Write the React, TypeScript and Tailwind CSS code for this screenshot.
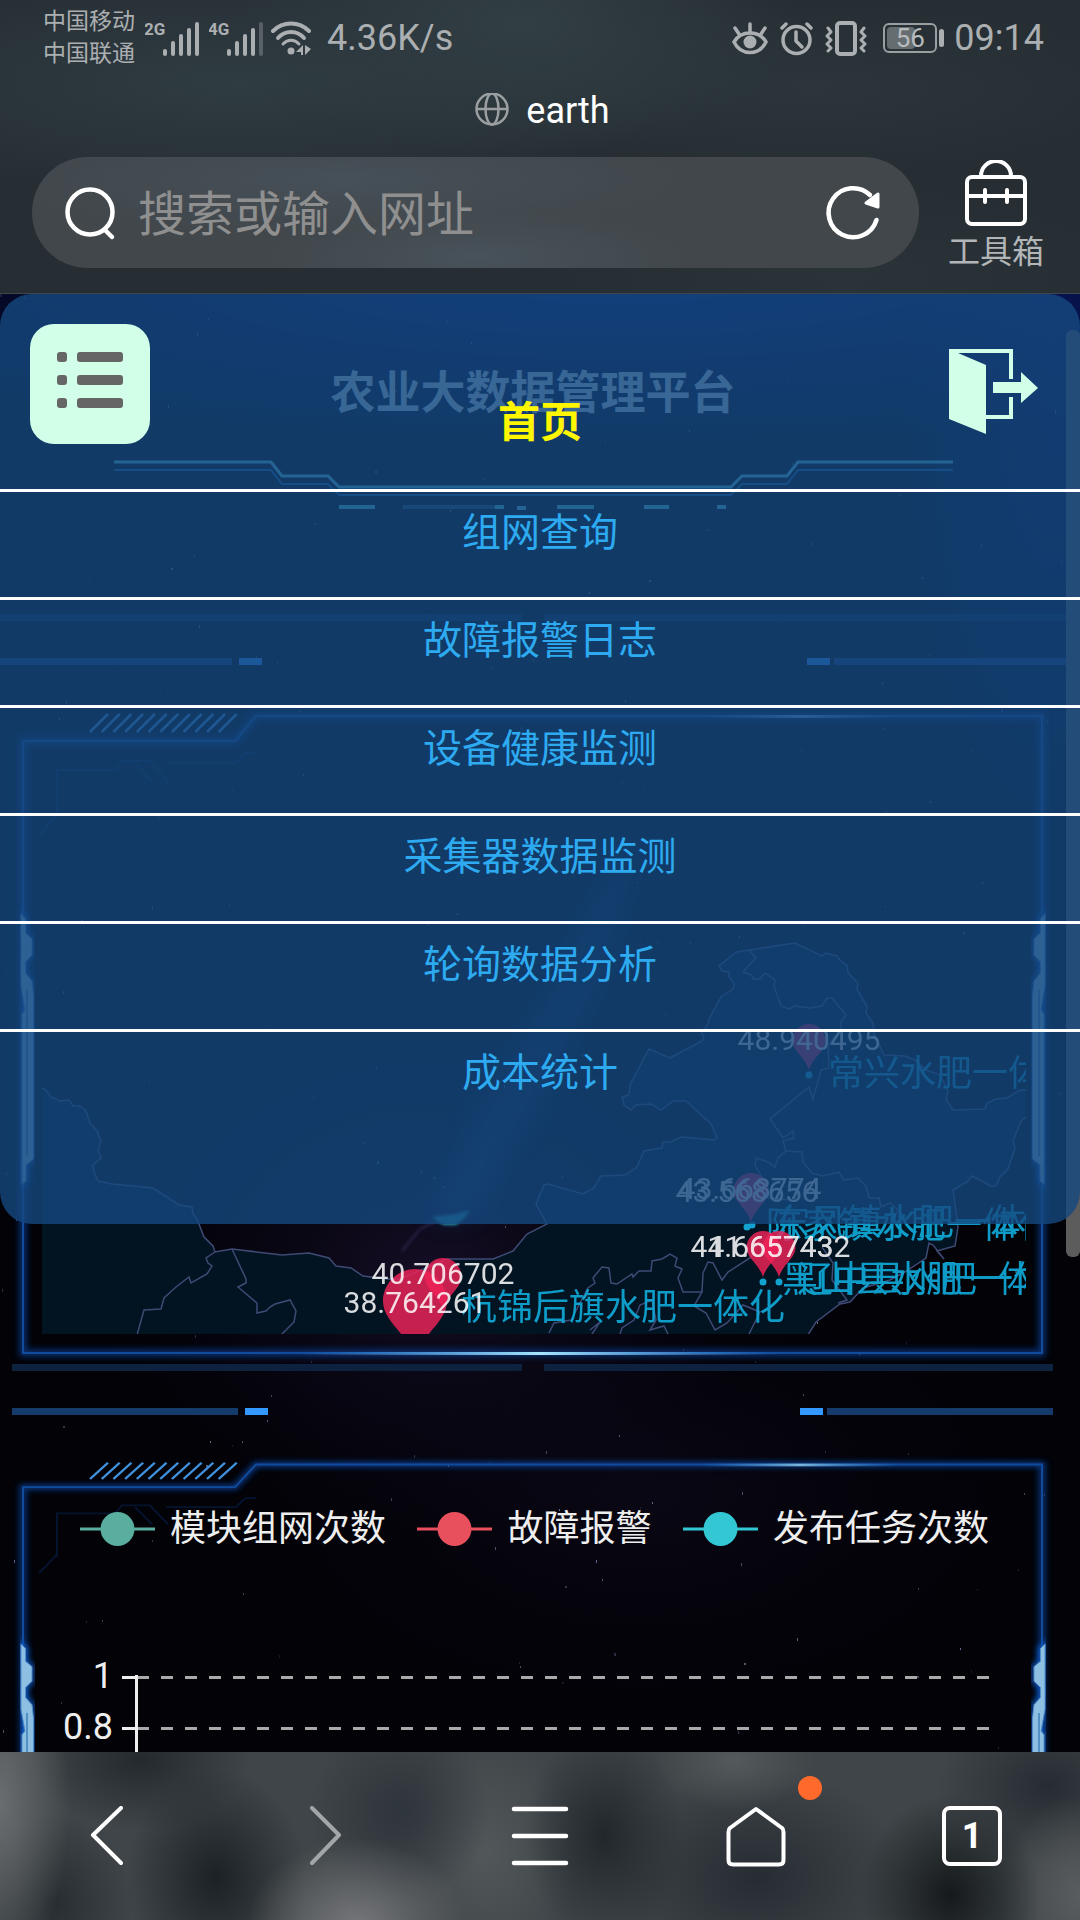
import React from "react";

const CJK = "font-['Roboto','Noto_Sans_CJK_SC',sans-serif]";

const menuItems = ["组网查询", "故障报警日志", "设备健康监测", "采集器数据监测", "轮询数据分析", "成本统计"];

const legend = [
  { label: "模块组网次数", color: "#5aaea0" },
  { label: "故障报警", color: "#e7505c" },
  { label: "发布任务次数", color: "#33c7d4" },
];

const stars = Array.from({ length: 230 }, (_, i) => ({
  x: (i * 397 + ((i * i * 31) % 211)) % 1066,
  y: (i * 613 + ((i * i * 17) % 307)) % 1458,
  o: 0.15 + ((i * 7) % 10) / 18,
}));

function Starfield() {
  return (
    <svg className="absolute inset-0 h-full w-full" viewBox="0 0 1080 1458" preserveAspectRatio="none" aria-hidden="true">
      <defs>
        <radialGradient id="top-glow" cx="0.5" cy="0.5" r="0.5">
          <stop offset="0" stopColor="#0a1a70" />
          <stop offset="1" stopColor="#0a1a70" stopOpacity="0" />
        </radialGradient>
        <radialGradient id="violet" cx="0.5" cy="0.5" r="0.5">
          <stop offset="0" stopColor="#1b1230" stopOpacity="0.75" />
          <stop offset="1" stopColor="#0a0716" stopOpacity="0" />
        </radialGradient>
        <filter id="soft" x="-50%" y="-50%" width="200%" height="200%">
          <feGaussianBlur stdDeviation="12" />
        </filter>
        <filter id="soft-small" x="-50%" y="-50%" width="200%" height="200%">
          <feGaussianBlur stdDeviation="1.5" />
        </filter>
      </defs>
      <rect width="1080" height="1458" fill="#020207" />
      <ellipse cx="620" cy="-20" rx="900" ry="170" fill="url(#top-glow)" />
      <ellipse cx="1060" cy="120" rx="160" ry="420" fill="url(#top-glow)" opacity="0.5" />
      <ellipse cx="430" cy="980" rx="330" ry="260" fill="url(#violet)" />
      <ellipse cx="640" cy="1200" rx="420" ry="240" fill="url(#violet)" opacity="0.45" />
      <path d="M430 925 L480 820 L560 690 L590 620 L640 540 L600 680 L530 820 L470 925 Z" fill="#143f78" opacity="0.4" filter="url(#soft)" />
      <path d="M432 923 L438 928 L444 931 L456 931 L464 925 L470 916 L455 920 Z" fill="#2aa5c0" opacity="0.9" filter="url(#soft-small)" />
      <path d="M402 957 L420 935 L438 926" fill="none" stroke="#4b3a72" strokeWidth="2" opacity="0.5" filter="url(#soft-small)" />
      {stars.map((s, i) => (
        <rect key={i} x={s.x} y={s.y} width={i % 9 === 0 ? 2 : 1} height={i % 4 === 0 ? 3 : 2} fill="#8fa3cf" opacity={s.o} />
      ))}
    </svg>
  );
}

function Signal({ label, weak }: { label: string; weak?: boolean }) {
  const tops = [47, 39, 32, 26, 20];
  return (
    <svg className="h-9 w-[54px]" viewBox="0 18 54 36" fill="none" aria-hidden="true">
      <text x="-1" y="33" fontFamily="Roboto, sans-serif" fontSize="17" fontWeight="700" fill="#abafb1">{label}</text>
      {tops.map((t, i) => (
        <rect key={t} x={18 + i * 8} y={t} width="4" height={54 - t} rx="2" fill="#abafb1" opacity={weak && i === 4 ? 0.35 : 1} />
      ))}
    </svg>
  );
}

function StatusBar() {
  return (
    <div className="flex h-[74px] items-center justify-between pl-[43px] pr-9 pt-[2px] text-[#abafb1]">
      <div className="flex items-center">
        <div className="mr-[10px] text-[23px] leading-8">
          <div>中国移动</div>
          <div>中国联通</div>
        </div>
        <Signal label="2G" />
        <div className="w-[10px]" />
        <Signal label="4G" weak />
        <svg className="ml-2 h-9 w-10" viewBox="0 0 40 36" fill="none" stroke="currentColor" strokeWidth="4" strokeLinecap="round" aria-hidden="true">
          <path d="M2 11 C12 1 28 1 38 11" />
          <path d="M7 18 C14 10 26 10 33 18" />
          <path d="M12 24 C17 19 23 19 28 24" strokeWidth="3" />
          <circle cx="20" cy="31" r="3.5" fill="currentColor" stroke="none" />
          <path d="M32 25 v10 h-2 v-3 l-5 0 z M34 25 v10 l6 -6 z" fill="currentColor" stroke="none" />
        </svg>
        <span className="ml-4 text-4xl">4.36K/s</span>
      </div>
      <div className="flex items-center">
        <svg className="h-9 w-9" viewBox="0 0 36 36" fill="none" stroke="currentColor" strokeWidth="3.5" strokeLinecap="round" aria-hidden="true">
          <path d="M2 22 C9 10 27 10 34 22 C27 36 9 36 2 22 Z" />
          <circle cx="18" cy="22" r="6.5" fill="currentColor" stroke="none" />
          <path d="M18 4 v8 M3 8 l4 6 M33 8 l-4 6" />
        </svg>
        <svg className="ml-3 h-9 w-[33px]" viewBox="0 0 33 36" fill="none" stroke="currentColor" strokeWidth="3.5" strokeLinecap="round" aria-hidden="true">
          <circle cx="16.500" cy="20" r="13.500" />
          <path d="M16 12 v9 l6 6" />
          <path d="M2 8 l4 -4 M31 8 l-4 -4" />
        </svg>
        <svg className="ml-3 h-9 w-[42px]" viewBox="0 0 42 36" fill="none" stroke="currentColor" strokeWidth="4" strokeLinejoin="round" strokeLinecap="round" aria-hidden="true">
          <rect x="12" y="3" width="18" height="31" rx="3" />
          <path d="M3 8 l3 4 l-4 4 l4 4 l-4 4 l4 4 l-3 3" strokeWidth="3" />
          <path d="M39 8 l-3 4 l4 4 l-4 4 l4 4 l-4 4 l3 3" strokeWidth="3" />
        </svg>
        <div className="ml-4 flex items-center gap-[2px]">
          <div className="relative flex h-[30px] w-[54px] items-center justify-center rounded-md border-2 border-[#9a9fa1]">
            <div className="absolute bottom-[2px] left-[2px] top-[2px] w-7 rounded-sm bg-[#666d70]" />
            <span className="relative text-[26px] leading-none text-[#b7bbbd]">56</span>
          </div>
          <div className="h-[18px] w-[5px] rounded-sm bg-[#abafb1]" />
        </div>
        <span className="ml-[10px] text-4xl">09:14</span>
      </div>
    </div>
  );
}

function BrowserHeader() {
  return (
    <header className="border-b border-[#40454a] bg-[#262e34] bg-[radial-gradient(ellipse_at_22%_28%,#2f3c42_0%,transparent_38%),radial-gradient(ellipse_at_48%_8%,#323f43_0%,transparent_35%),radial-gradient(ellipse_at_75%_30%,#2b353a_0%,transparent_30%),radial-gradient(ellipse_at_78%_95%,#2a3338_0%,transparent_25%)] pb-[21px]">
      <StatusBar />
      <div className="flex h-[73px] items-center justify-center gap-4 pl-1">
        <svg className="h-9 w-9" viewBox="0 0 36 36" fill="none" stroke="#9c9fa2" strokeWidth="2.5" aria-hidden="true">
          <circle cx="18" cy="16" r="15.500" />
          <ellipse cx="18" cy="16" rx="6.500" ry="15.500" />
          <path d="M2 16 h32" />
        </svg>
        <h1 className="text-4xl text-white">earth</h1>
      </div>
      <div className="mt-[10px] flex items-start pl-8 pr-9">
        <form className="flex h-[111px] flex-1 items-center rounded-full bg-[#41474b] bg-[radial-gradient(ellipse_at_35%_20%,#465058_0%,transparent_45%),radial-gradient(ellipse_at_50%_90%,#48525a_0%,transparent_35%)] pl-8 pr-9">
          <svg className="h-14 w-14" viewBox="0 0 56 56" fill="none" stroke="white" strokeWidth="4.5" strokeLinecap="round" aria-hidden="true">
            <circle cx="26" cy="27" r="22.500" />
            <path d="M41 45 l7 7" />
          </svg>
          <input aria-label="搜索或输入网址" placeholder="搜索或输入网址" className="ml-[18px] min-w-0 flex-1 bg-transparent pt-1 text-5xl text-white outline-none placeholder:text-[#8f8f8f]" />
          <button type="button" aria-label="刷新">
            <svg className="h-[60px] w-[60px]" viewBox="0 0 60 60" fill="none" stroke="white" strokeWidth="4.500" strokeLinecap="round" aria-hidden="true">
              <path d="M53.500 37 A24.500 24.500 0 1 1 47 12" />
              <path d="M43 20 L55 11 L55 24 Z" fill="white" strokeWidth="3" strokeLinejoin="round" />
            </svg>
          </button>
        </form>
        <button type="button" className="ml-[29px] flex flex-col items-center pt-[3px]">
          <svg className="h-[66px] w-[66px]" viewBox="0 0 66 66" fill="none" stroke="white" strokeWidth="4" strokeLinecap="round" aria-hidden="true">
            <rect x="4" y="17" width="58" height="47" rx="5" />
            <path d="M18 16 A15 15 0 0 1 48 16 M4 36 H62 M22 30 v12 M44 30 v12" />
          </svg>
          <span className="mt-[6px] text-[32px] leading-10 text-[#b3b6b8]">工具箱</span>
        </button>
      </div>
    </header>
  );
}

function BannerLines() {
  const shape = "M114 168 H271 L282 182 H328 L339 193 H731 L742 182 H787 L798 168 H953";
  return (
    <svg className="absolute inset-0 h-full w-full" viewBox="0 0 1080 320" preserveAspectRatio="none" fill="none" aria-hidden="true">
      <path d={shape} stroke="#60cfe6" strokeWidth="3" />
      <path d={shape} transform="translate(0 8)" stroke="#1b5f9f" strokeWidth="2" />
      <g fill="#60cfe6">
        <rect x="339" y="211" width="36" height="4" />
        <rect x="403" y="211" width="92" height="4" opacity="0.35" />
        <rect x="495" y="211" width="9" height="4" />
        <rect x="517" y="212" width="9" height="4" />
        <rect x="557" y="211" width="37" height="4" />
        <rect x="644" y="211" width="25" height="4" />
        <rect x="717" y="211" width="9" height="4" />
      </g>
    </svg>
  );
}

function Divider({ wide }: { wide?: boolean }) {
  const bar = wide ? "h-[7px] w-[232px] bg-[#153b6d]" : "h-[7px] w-[226px] bg-[#153b6d]";
  return (
    <div className={wide ? "mr-[14px]" : "ml-3 mr-[27px]"} aria-hidden="true">
      <div className="flex justify-between gap-[22px]">
        <div className="h-[7px] flex-1 bg-[#0d223f]" />
        <div className="h-[7px] flex-1 bg-[#0d223f]" />
      </div>
      <div className="mt-[37px] flex justify-between">
        <div className="flex gap-[7px]">
          <div className={bar} />
          <div className="h-[7px] w-[23px] bg-[#3398ff]" />
        </div>
        <div className="flex gap-1">
          <div className="h-[7px] w-[23px] bg-[#3398ff]" />
          <div className={bar} />
        </div>
      </div>
    </div>
  );
}

const SIDE = "M21 214 L25.500 219 V233 L32 239 V255 L25.500 262 V273 L32 281 L33.500 296 V459 L26 465 V481 L22 484 V314 L25 310 L21 286 Z";

function Frame({ id }: { id: string }) {
  const outline = "M23 41 H235 L256 16 H1042 V653 H23 Z";
  return (
    <svg className="absolute inset-0 h-full w-full" viewBox="0 0 1080 664" preserveAspectRatio="none" fill="none" aria-hidden="true">
      <defs>
        <filter id={id + "-blur"} x="-5%" y="-5%" width="110%" height="110%">
          <feGaussianBlur stdDeviation="3" />
        </filter>
        <linearGradient id={id + "-shine"}>
          <stop offset="0" stopColor="#4fb4ff" stopOpacity="0" />
          <stop offset="0.5" stopColor="#a5e6ff" />
          <stop offset="1" stopColor="#4fb4ff" stopOpacity="0" />
        </linearGradient>
      </defs>
      <path d={outline} stroke="#093c90" strokeWidth="7" opacity="0.8" filter={"url(#" + id + "-blur)"} />
      <path d={outline} stroke="#0f4c9e" strokeWidth="2" />
      <rect x="700" y="15" width="200" height="3" fill={"url(#" + id + "-shine)"} opacity="0.7" />
      <rect x="300" y="652" width="480" height="3" fill={"url(#" + id + "-shine)"} />
      <g stroke="#4090dc" strokeWidth="2.500">
        {Array.from({ length: 12 }, (_, i) => (
          <path key={i} d={"M" + (90 + i * 11.7) + " 32 l18 -18"} />
        ))}
      </g>
      <g stroke="#04142f" strokeWidth="2">
        <path d="M57 118 V70 H115 L122 61 H150 L168 82 M166 63 H236 L245 53 H256 M57 115 L39 136 M135 63 L152 82" />
      </g>
      {[undefined, "translate(1066 0) scale(-1 1)"].map((t, i) => (
        <g key={i} transform={t}>
          <path d={SIDE} stroke="#0f59c4" strokeWidth="5" filter={"url(#" + id + "-blur)"} />
          <path d={SIDE} fill="#8dbfe2" stroke="#4f8fc8" strokeWidth="1" />
          <path d="M27 290 V456" stroke="#3f7fb8" strokeWidth="1.500" />
        </g>
      ))}
    </svg>
  );
}

function Pin({ x, top, r }: { x: number; top: number; r: number }) {
  const k = r / 17;
  return (
    <path
      transform={"translate(" + x + " " + top + ") scale(" + k + ")"}
      d="M0 0 C9 0 16.500 7.500 16.500 16.500 C16.500 27 4 33 0 46 C-4 33 -16.500 27 -16.500 16.500 C-16.500 7.500 -9 0 0 0 Z"
      fill="#ee2359"
      opacity="0.83"
    />
  );
}

const LAND =
  "M38 1086 L46 1090 L51 1097 L60 1101 L69 1100 L73 1106 L80 1106 L86 1111 L90 1123 L97 1131 L101 1141 L98 1150 L101 1158 L93 1165 L94 1172 L98 1181 L112 1184 L153 1188 L179 1205 L192 1207 L193 1214 L197 1219 L204 1237 L213 1246 L215 1252 L232 1249 L282 1255 L309 1253 L329 1258 L336 1266 L351 1268 L363 1276 L388 1279 L400 1279 L447 1259 L493 1259 L513 1251 L527 1234 L547 1224 L536 1204 L544 1185 L548 1184 L583 1194 L594 1188 L601 1176 L625 1175 L637 1167 L644 1151 L662 1148 L663 1142 L671 1142 L681 1137 L714 1140 L717 1138 L711 1124 L686 1101 L673 1101 L661 1110 L651 1104 L636 1105 L631 1110 L624 1105 L622 1097 L629 1095 L630 1085 L649 1049 L670 1058 L702 1041 L704 1036 L701 1034 L708 1024 L709 1019 L721 997 L733 989 L734 983 L729 977 L729 972 L722 971 L719 966 L736 952 L749 950 L795 943 L822 956 L826 953 L837 956 L840 960 L847 966 L848 973 L853 978 L858 983 L857 989 L867 1007 L866 1013 L873 1023 L874 1034 L884 1055 L905 1056 L915 1060 L926 1070 L940 1075 L948 1091 L946 1099 L953 1110 L985 1109 L987 1103 L996 1099 L1007 1098 L1020 1090 L1030 1090 L1030 1114 L1021 1121 L1013 1141 L1015 1148 L1008 1169 L1000 1177 L996 1186 L991 1186 L972 1176 L967 1182 L953 1190 L955 1203 L958 1227 L955 1246 L937 1251 L944 1259 L933 1245 L929 1243 L926 1258 L905 1272 L890 1280 L863 1288 L850 1302 L840 1304 L816 1322 L806 1338 L38 1338 Z";

const BORDERS = [
  "M749 950 L756 958 L743 972 L751 975 L754 979 L760 979 L765 973 L775 980 L774 986 L781 1006 L789 1009 L795 1006 L810 1008 L822 1006 L827 998 L832 998 L846 1015 L841 1022 L841 1029 L828 1045 L829 1068 L821 1070 L813 1099 L809 1087 L770 1119 L783 1138 L793 1131 L794 1138 L783 1141 L786 1151 L778 1158 L775 1167 L768 1162 L756 1158 L755 1165 L768 1188 L767 1198 L790 1200",
  "M786 1151 L802 1152 L803 1162 L812 1173 L823 1176 L839 1172 L844 1180 L858 1178 L866 1186 L869 1198 L879 1198 L881 1207 L890 1203 L898 1210 L893 1220",
  "M549 1333 L554 1323 L571 1320 L588 1288 L595 1283 L593 1278 L602 1267 L609 1268 L611 1283 L617 1284 L632 1274 L633 1277 L639 1271 L651 1271 L652 1261 L662 1259 L670 1254 L677 1258 L675 1266 L682 1269 L678 1278 L683 1292 L702 1292 L694 1306 L706 1313 L715 1330 L727 1323 L743 1305 L760 1312 L749 1334",
  "M702 1292 L703 1273 L708 1262 L713 1263 L722 1280 L728 1272 L750 1258 L760 1240",
  "M822 1247 L833 1263 L832 1280 L847 1300 L838 1303",
  "M620 1334 L622 1328 L634 1320 L640 1305 L652 1300 L656 1320 L650 1330 L664 1326 L668 1334 M590 1330 L600 1322 L592 1334",
  "M215 1252 L206 1258 L208 1263 L212 1266 L207 1274 L191 1283 L189 1277 L176 1287 L164 1298 L161 1309 L144 1310 L137 1335",
  "M232 1249 L246 1279 L246 1283 L238 1287 L257 1303 L257 1313 L266 1311 L270 1307 L275 1304 L290 1300 L296 1311 L294 1322 L281 1335",
];

const pinValues = [
  { x: 809, y: 1050, v: "48.940495" },
  { x: 750, y: 1199, v: "43.668774" },
  { x: 747, y: 1202, v: "43.568656" },
  { x: 762, y: 1257, v: "41.665743" },
  { x: 779, y: 1257, v: "41.657432" },
  { x: 443, y: 1284, v: "40.706702" },
  { x: 415, y: 1313, v: "38.764261" },
];

const sites = [
  { x: 828, y: 1086, v: "常兴水肥一体化" },
  { x: 766, y: 1238, v: "陈家镇水肥一体化" },
  { x: 774, y: 1235, v: "东风镇水肥一体化" },
  { x: 782, y: 1292, v: "黑山县水肥一体化" },
  { x: 797, y: 1292, v: "辽中县水肥一体化" },
  { x: 461, y: 1320, v: "杭锦后旗水肥一体化" },
];

function SiteMap() {
  return (
    <svg className="relative block h-auto w-full" viewBox="42 760 984 574" role="img" aria-label="站点地图">
      <path d={LAND} fill="#021321" stroke="#3f4a75" strokeWidth="1.500" />
      <g fill="none" stroke="#3f4a75" strokeWidth="1.500">
        {BORDERS.map((d) => (
          <path key={d} d={d} />
        ))}
      </g>
      <g fill="#12a3d0">
        <circle cx="809" cy="1075" r="3.500" />
        <circle cx="747" cy="1227" r="3.500" />
        <circle cx="752" cy="1225" r="3.500" />
        <circle cx="763" cy="1282" r="3.500" />
        <circle cx="779" cy="1282" r="3.500" />
      </g>
      <g fontFamily="Roboto, 'Noto Sans CJK SC', sans-serif" fontSize="36" fill="#10a9d8" opacity="0.92">
        {sites.map((s) => (
          <text key={s.v} x={s.x} y={s.y}>{s.v}</text>
        ))}
      </g>
      <Pin x={809} top={1024} r={17} />
      <Pin x={751} top={1173} r={18} />
      <Pin x={763} top={1231} r={17} />
      <Pin x={779} top={1231} r={17} />
      <Pin x={443} top={1258} r={19} />
      <Pin x={415} top={1269} r={33} />
      <g fontFamily="Roboto, sans-serif" fontSize="30" fill="#ffffff" opacity="0.85" textAnchor="middle">
        {pinValues.map((p) => (
          <text key={p.v} x={p.x} y={p.y}>{p.v}</text>
        ))}
      </g>
    </svg>
  );
}

function Chart() {
  return (
    <div className="relative pt-[59px]">
      <div className="flex justify-between pl-20 pr-[91px]">
        {legend.map((l) => (
          <div key={l.label} className="flex items-center gap-[15px]">
            <svg className="h-9 w-[75px]" viewBox="0 0 75 36" aria-hidden="true">
              <path d="M0 18 H75" stroke={l.color} strokeWidth="3" />
              <circle cx="37.500" cy="18" r="17" fill={l.color} />
            </svg>
            <span className="text-4xl text-[#eeeeee]">{l.label}</span>
          </div>
        ))}
      </div>
      <svg className="mt-[111px] block h-auto w-full" viewBox="0 1660 1080 320" role="img" aria-label="次数统计图">
        {["1", "0.8", "0.6", "0.4", "0.2", "0"].map((v, i) => (
          <g key={v}>
            <path d={"M137 " + (1677.5 + i * 51) + " H989"} stroke="#aaaaaa" strokeWidth="3" strokeDasharray="12 12" />
            <path d={"M122 " + (1677.5 + i * 51) + " H137"} stroke="#eeeeee" strokeWidth="3" />
            <text x="113" y={1688 + i * 51} textAnchor="end" fontFamily="Roboto, sans-serif" fontSize="36" fill="#eeeeee">{v}</text>
          </g>
        ))}
        <path d="M136.500 1675 V1934" stroke="#eeeeee" strokeWidth="3" />
      </svg>
    </div>
  );
}

function MenuOverlay() {
  return (
    <>
      <nav className="absolute inset-x-0 top-0 h-[930px] rounded-[32px] bg-[#15487f]/80">
        <ul className="text-center">
          <li className="border-b-[3px] border-white">
            <a href="#home" className="flex h-[195px] items-end justify-center pb-[36px] text-[42px] font-bold leading-[60px] text-[#fff700]">首页</a>
          </li>
          {menuItems.map((m, i) => (
            <li key={m} className={i < menuItems.length - 1 ? "border-b-[3px] border-white" : ""}>
              <a href={"#menu-" + i} className="block h-[105px] pt-[12px] text-[39px] leading-[58px] text-[#2daaf0]">{m}</a>
            </li>
          ))}
        </ul>
      </nav>
      <div className="absolute inset-x-0 top-[30px] flex justify-between pl-[30px] pr-[42px]">
        <button type="button" aria-label="菜单" className="flex h-[120px] w-[120px] flex-col gap-[13px] rounded-3xl bg-[#d1ffe8] pl-[27px] pt-[28px]">
          {[0, 1, 2].map((i) => (
            <span key={i} className="flex gap-[10px]">
              <span className="h-[10px] w-[10px] rounded-[3px] bg-[#666666]" />
              <span className="h-[10px] w-[46px] rounded-[3px] bg-[#666666]" />
            </span>
          ))}
        </button>
        <button type="button" aria-label="退出" className="mt-[25px] self-start">
          <svg className="h-[86px] w-[89px]" viewBox="0 0 89 86" fill="#d1ffe8" aria-hidden="true">
            <path d="M0 0 H64 V30 H60 V4 H9 L37 16 V66 H60 V48 H64 V70 H37 V85 L0 70 Z" />
            <path d="M44 33 H72 V23 L89 39 L72 54 V44 H44 Z" />
          </svg>
        </button>
      </div>
    </>
  );
}

function BottomNav() {
  const cell = "relative flex items-center justify-center";
  return (
    <footer className="grid h-[168px] grid-cols-5 bg-[#3f4548] bg-[radial-gradient(110px_90px_at_33%_105%,#77787c_0%,transparent_100%),radial-gradient(70px_170px_at_0%_30%,#6a6d6f_0%,transparent_100%),radial-gradient(90px_110px_at_20%_75%,#1c2125_0%,transparent_100%),radial-gradient(110px_70px_at_13%_5%,#23292d_0%,transparent_100%),radial-gradient(80px_90px_at_5%_90%,#272d31_0%,transparent_100%),radial-gradient(80px_110px_at_56%_50%,#22272c_0%,transparent_100%),radial-gradient(90px_100px_at_88%_85%,#15191c_0%,transparent_100%),radial-gradient(80px_50px_at_68%_5%,#545a5b_0%,transparent_100%),radial-gradient(80px_100px_at_100%_85%,#5a5d5f_0%,transparent_100%),radial-gradient(110px_80px_at_97%_20%,#262c32_0%,transparent_100%),radial-gradient(150px_110px_at_70%_75%,#262c32_0%,transparent_100%),radial-gradient(90px_90px_at_37%_35%,#2e353b_0%,transparent_100%),radial-gradient(90px_120px_at_45%_60%,#52575a_0%,transparent_100%)]">
      <button type="button" aria-label="后退" className={cell}>
        <svg className="h-[60px] w-[60px]" viewBox="0 0 60 60" fill="none" stroke="white" strokeWidth="4" strokeLinecap="round" strokeLinejoin="round"><path d="M43 2 L15 29 L43 57" /></svg>
      </button>
      <button type="button" aria-label="前进" className={cell}>
        <svg className="h-[60px] w-[60px]" viewBox="0 0 60 60" fill="none" stroke="#a3a6a8" strokeWidth="4" strokeLinecap="round" strokeLinejoin="round"><path d="M18 2 L45 29 L18 57" /></svg>
      </button>
      <button type="button" aria-label="菜单列表" className={cell}>
        <svg className="h-[60px] w-[60px]" viewBox="0 0 60 60" fill="none" stroke="white" strokeWidth="4.500" strokeLinecap="round"><path d="M4 3 H56 M4 30 H56 M4 57 H56" /></svg>
      </button>
      <button type="button" aria-label="主页" className={cell}>
        <svg className="h-[62px] w-[62px]" viewBox="0 0 62 62" fill="none" stroke="white" strokeWidth="4" strokeLinejoin="round"><path d="M31 4 L57 23 Q58.500 24 58.500 27 V55 Q58.500 59.500 54 59.500 H8 Q3.500 59.500 3.500 55 V27 Q3.500 24 5 23 Z" /></svg>
        <span className="absolute right-[42px] top-6 h-6 w-6 rounded-full bg-[#ff6a2c]" />
      </button>
      <button type="button" aria-label="标签页" className={cell}>
        <span className="flex h-[60px] w-[60px] items-center justify-center rounded-lg border-4 border-white text-4xl font-bold text-white">1</span>
      </button>
    </footer>
  );
}

export default function App() {
  return (
    <div className={"flex h-screen flex-col overflow-hidden bg-black " + CJK}>
      <BrowserHeader />
      <main className="relative min-h-0 flex-1 overflow-hidden">
        <Starfield />
        <div className="relative">
          <div className="relative h-[320px] pt-[66px]">
            <BannerLines />
            <h2 className="relative pr-[14px] text-center text-[45px] font-bold leading-[68px] text-[#c4dcec]">农业大数据管理平台</h2>
          </div>
          <Divider wide />
          <section className="relative mt-[35px] pb-[30px] pl-[42px] pr-[54px] pt-[60px]">
            <Frame id="map-frame" />
            <SiteMap />
          </section>
          <Divider />
          <section className="relative mt-[35px] h-[602px]">
            <Frame id="chart-frame" />
            <Chart />
          </section>
        </div>
        <div className="absolute right-0 top-9 h-[927px] w-[14px] rounded-md bg-[#5c5c5c]" />
        <MenuOverlay />
      </main>
      <BottomNav />
    </div>
  );
}
